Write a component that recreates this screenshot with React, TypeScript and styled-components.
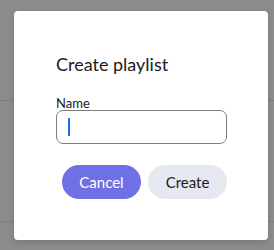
import React from "react";
import styled, { createGlobalStyle } from "styled-components";

const GlobalStyle = createGlobalStyle`
  html, body {
    margin: 0;
    padding: 0;
    background: #ffffff;
    font-family: Lato, "Noto Sans", sans-serif;
  }
`;

const Page = styled.div`
  position: relative;
  width: 274px;
  height: 250px;
  overflow: hidden;
  background: #ffffff;
`;

const PageRule = styled.div<{ top: number }>`
  position: absolute;
  left: 0;
  right: 0;
  top: ${({ top }) => top}px;
  height: 1px;
  background: #e6e6e6;
`;

const Backdrop = styled.div`
  position: absolute;
  inset: 0;
  background: rgba(0, 0, 0, 0.45);
  padding: 11px 6px 0 14px;
`;

const Modal = styled.div`
  width: 254px;
  height: 229px;
  box-sizing: border-box;
  background: #ffffff;
  border-radius: 4px;
  padding: 42px 41px 0 42px;
  display: flex;
  flex-direction: column;
  box-shadow: 0 2px 6px rgba(0, 0, 0, 0.15);
`;

const Title = styled.h2`
  margin: 0;
  font-size: 18px;
  line-height: 22px;
  font-weight: 400;
  color: #1b1b1b;
`;

const Label = styled.label`
  margin-top: 21px;
  font-size: 13px;
  line-height: 14px;
  color: #1b1b1b;
`;

const Field = styled.div`
  position: relative;
  height: 34px;
  box-sizing: border-box;
  border: 1px solid #7d7d7d;
  border-radius: 7px;
  display: flex;
  align-items: center;
`;

const Input = styled.input`
  flex: 1;
  border: none;
  outline: none;
  background: transparent;
  padding: 0 11px;
  font-family: inherit;
  font-size: 14px;
  caret-color: transparent;
`;

const Caret = styled.span`
  position: absolute;
  left: 11px;
  top: 7px;
  width: 2px;
  height: 18px;
  background: #1f6fe5;
`;

const Actions = styled.div`
  margin-top: 21px;
  display: flex;
  justify-content: flex-end;
  gap: 7px;
`;

const Button = styled.button<{ primary?: boolean }>`
  width: 79px;
  height: 34px;
  border: none;
  border-radius: 17px;
  font-family: inherit;
  font-size: 15px;
  cursor: pointer;
  background: ${({ primary }) => (primary ? "#7070e6" : "#e5e8f1")};
  color: ${({ primary }) => (primary ? "#ffffff" : "#1b1b1b")};
`;

export default function App() {
  return (
    <Page>
      <GlobalStyle />
      <PageRule top={100} />
      <PageRule top={221} />
      <Backdrop>
        <Modal>
          <Title>Create playlist</Title>
          <Label htmlFor="playlist-name">Name</Label>
          <Field>
            <Input id="playlist-name" type="text" />
            <Caret />
          </Field>
          <Actions>
            <Button primary>Cancel</Button>
            <Button>Create</Button>
          </Actions>
        </Modal>
      </Backdrop>
    </Page>
  );
}
